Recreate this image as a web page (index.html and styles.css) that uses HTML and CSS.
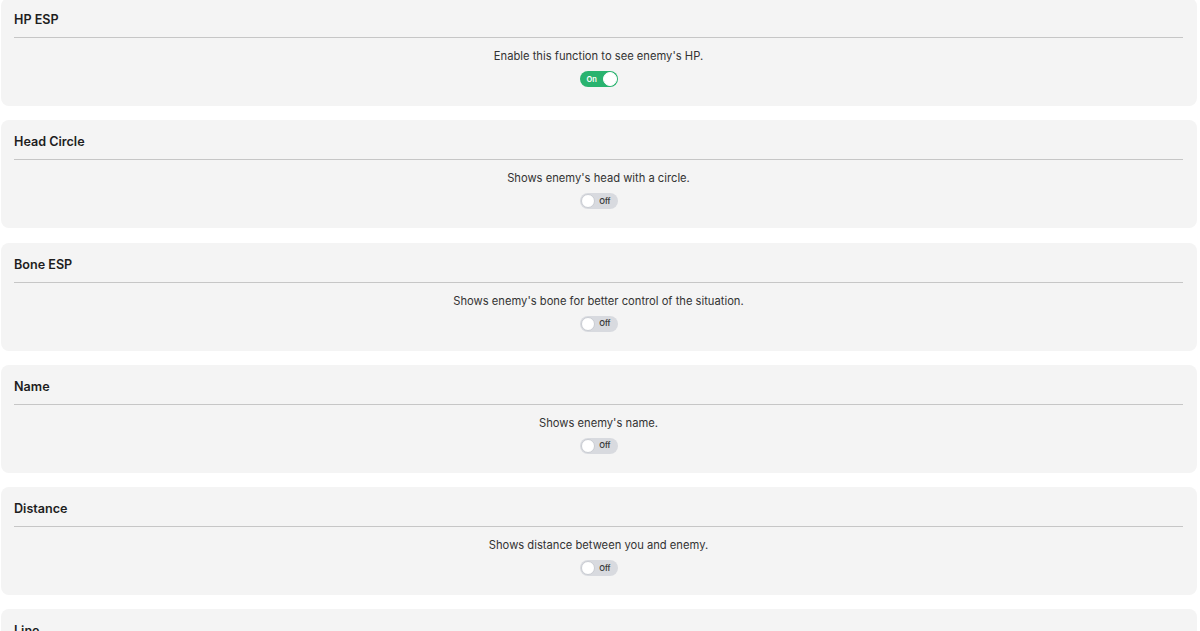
FILE: index.html
```html
<!DOCTYPE html>
<html lang="en">
<head>
<meta charset="utf-8">
<title>ESP Settings</title>
<link rel="stylesheet" href="styles.css">
</head>
<body>
<div class="list">
  <section class="card">
    <h2 class="title">HP ESP</h2>
    <p class="desc">Enable this function to see enemy's HP.</p>
    <div class="toggle on"><span class="label">On</span><span class="knob"></span></div>
  </section>
  <section class="card">
    <h2 class="title">Head Circle</h2>
    <p class="desc">Shows enemy's head with a circle.</p>
    <div class="toggle"><span class="knob"></span><span class="label">Off</span></div>
  </section>
  <section class="card">
    <h2 class="title">Bone ESP</h2>
    <p class="desc">Shows enemy's bone for better control of the situation.</p>
    <div class="toggle"><span class="knob"></span><span class="label">Off</span></div>
  </section>
  <section class="card">
    <h2 class="title">Name</h2>
    <p class="desc">Shows enemy's name.</p>
    <div class="toggle"><span class="knob"></span><span class="label">Off</span></div>
  </section>
  <section class="card">
    <h2 class="title">Distance</h2>
    <p class="desc">Shows distance between you and enemy.</p>
    <div class="toggle"><span class="knob"></span><span class="label">Off</span></div>
  </section>
  <section class="card">
    <h2 class="title">Line</h2>
    <p class="desc">Shows a line from you to enemy.</p>
    <div class="toggle"><span class="knob"></span><span class="label">Off</span></div>
  </section>
</div>
</body>
</html>
```
FILE: styles.css
```css
html, body {
  margin: 0;
  padding: 0;
  background: #ffffff;
  font-family: "Inter", "Noto Sans", "Liberation Sans", sans-serif;
  color: #222222;
}

.list {
  display: flex;
  flex-direction: column;
  gap: 14.25px;
  margin: -2px 3px 0 1px;
}

.card {
  background: #f4f4f4;
  border-radius: 8px;
  padding: 12px 14px 19px 13px;
  display: flex;
  flex-direction: column;
  align-items: center;
  height: 108px;
  box-sizing: border-box;
}

.title {
  align-self: stretch;
  margin: 0;
  font-size: 12.6px;
  font-weight: 600;
  line-height: 20px;
  padding-bottom: 7px;
  border-bottom: 1px solid #c6c6c6;
  color: #1e1e1e;
}

.desc {
  margin: 10px 0 0;
  font-size: 11.2px;
  line-height: 16px;
  color: #333333;
}

.toggle {
  margin-top: 7px;
  width: 38px;
  height: 16px;
  border-radius: 8px;
  background: #d8dadf;
  display: flex;
  align-items: center;
  justify-content: space-between;
  box-sizing: border-box;
  padding: 0 1px;
}

.toggle .knob {
  width: 14px;
  height: 14px;
  border-radius: 50%;
  background: #ffffff;
  box-sizing: border-box;
  border: 1px solid #c9ccd2;
}

.toggle .label {
  font-size: 7.5px;
  font-weight: 600;
  color: #3a3a3a;
  padding-right: 6px;
}

.toggle.on {
  background: #29b36f;
}

.toggle.on .label {
  color: #ffffff;
  padding: 0 0 0 6px;
}

.toggle.on .knob {
  border-color: #ffffff;
}
```
